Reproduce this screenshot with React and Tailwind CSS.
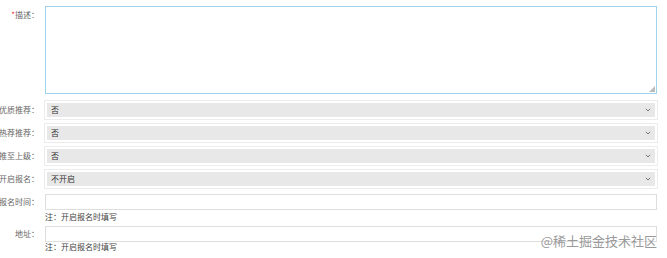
import React from "react";

const font = { fontFamily: '"Noto Sans CJK SC", "Liberation Sans", sans-serif' };

function Label({ children, required }) {
  return (
    <div className="w-[39px] shrink-0 flex justify-end overflow-hidden whitespace-nowrap text-[8px] text-[#666]">
      <span className="shrink-0">
        {required && <span className="text-[#e33]">*</span>}
        {children}：
      </span>
    </div>
  );
}

function Chevron() {
  return (
    <svg width="6" height="4" viewBox="0 0 6 4" className="shrink-0">
      <path d="M0.8 0.8 L3 3 L5.2 0.8" fill="none" stroke="#777" strokeWidth="1" />
    </svg>
  );
}

function SelectRow({ label, value }) {
  return (
    <div className="flex items-center h-[20px]">
      <Label>{label}</Label>
      <div className="ml-[5px] w-[614px] h-[20px] border border-[#ececec] bg-white p-[2px] flex">
        <div className="flex-1 bg-[#e8e8e8] flex items-center justify-between pl-[4px] pr-[4px] text-[8px] text-[#333]">
          <span>{value}</span>
          <Chevron />
        </div>
      </div>
    </div>
  );
}

function InputRow({ label }) {
  return (
    <div className="flex items-center h-[16px]">
      <Label>{label}</Label>
      <div className="ml-[6px] w-[612px] h-[16px] border border-[#dedede] bg-white" />
    </div>
  );
}

function Note() {
  return (
    <div className="pl-[45px] text-[8px] text-[#444] leading-none">注：开启报名时填写</div>
  );
}

export default function App() {
  return (
    <div className="relative w-[667px] h-[258px] bg-white overflow-hidden" style={font}>
      <div className="flex flex-col pt-[6px]">
        <div className="flex items-start">
          <div className="pt-[3px] flex">
            <Label required>描述</Label>
          </div>
          <div className="relative ml-[6px] w-[612px] h-[88px] border border-[#9fd3ee] bg-white">
            <svg width="6" height="6" viewBox="0 0 6 6" className="absolute right-[1px] bottom-[1px]">
              <path d="M6 0 L6 6 L0 6 Z" fill="#bbb" />
            </svg>
          </div>
        </div>
        <div className="mt-[6px] flex flex-col gap-[3px]">
          <SelectRow label="是否优质推荐" value="否" />
          <SelectRow label="是否热荐推荐" value="否" />
          <SelectRow label="是否推至上级" value="否" />
          <SelectRow label="是否开启报名" value="不开启" />
        </div>
        <div className="mt-[5px]">
          <InputRow label="报名时间" />
        </div>
        <div className="mt-[3px]">
          <Note />
        </div>
        <div className="mt-[5px]">
          <InputRow label="地址" />
        </div>
        <div className="mt-[1px]">
          <Note />
        </div>
      </div>
      <div className="absolute right-[10px] top-[234px] text-[13px] text-[#9a9a9a] leading-none whitespace-nowrap">
        @稀土掘金技术社区
      </div>
    </div>
  );
}
